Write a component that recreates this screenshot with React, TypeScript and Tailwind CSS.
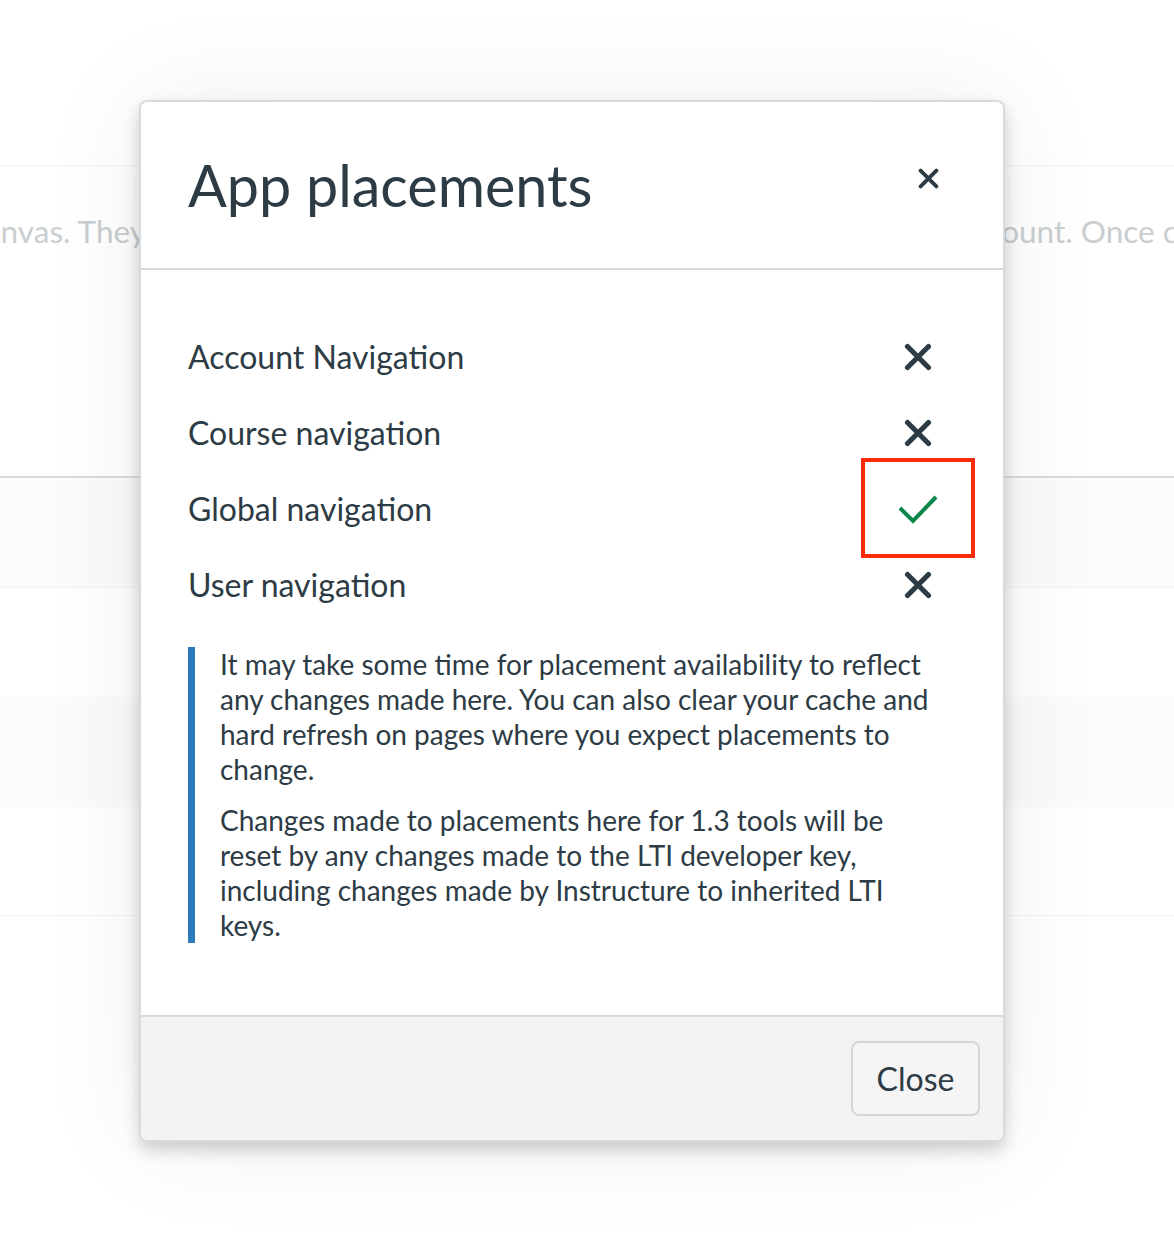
import React from "react";

type Placement = {
  label: string;
  enabled: boolean;
  highlighted?: boolean;
};

const placements: Placement[] = [
  { label: "Account Navigation", enabled: false },
  { label: "Course navigation", enabled: false },
  { label: "Global navigation", enabled: true, highlighted: true },
  { label: "User navigation", enabled: false },
];

const XIcon = ({ size, stroke }: { size: number; stroke: number }) => (
  <svg width={size} height={size} viewBox="0 0 24 24" fill="none">
    <path
      d="M3 3 L21 21 M21 3 L3 21"
      stroke="#2d3b45"
      strokeWidth={stroke}
      strokeLinecap="round"
    />
  </svg>
);

const CheckIcon = () => (
  <svg width="42" height="32" viewBox="0 0 42 32" fill="none">
    <path d="M3 15 L16 28 L39 4" stroke="#0b874b" strokeWidth="4" strokeLinejoin="miter" />
  </svg>
);

const BackgroundPage = () => (
  <div className="flex flex-col">
    <div className="h-[165px]" />
    <div className="h-[311px] border-t border-[#f3f4f5] text-[31.5px] text-[#c9ced1] whitespace-nowrap overflow-hidden">
      <div className="flex h-[131px] items-center">
        <div className="w-[146px] shrink-0 flex justify-end overflow-hidden">
          <span className="shrink-0">features to Canvas. They</span>
        </div>
        <div className="w-[810px] shrink-0" />
        <span className="shrink-0">account. Once configured</span>
      </div>
    </div>
    <div className="h-[2px] bg-[#d9dde0]" />
    <div className="h-[110px] bg-[#fafbfb] border-b border-[#f3f4f5]" />
    <div className="h-[109px] bg-white" />
    <div className="h-[110px] bg-[#fafbfb]" />
    <div className="h-[109px] bg-white border-b border-[#f3f4f5]" />
  </div>
);

const AppPlacementsModal = () => (
  <div className="absolute left-[139px] top-[100px] w-[866px] rounded-[8px] border-2 border-[#d7dade] bg-white shadow-[0_8px_16px_rgba(0,0,0,0.18),0_0_110px_rgba(0,0,0,0.07)] overflow-hidden">
    <div className="h-[168px] flex items-center justify-between pl-[47px] pr-[54px] border-b-2 border-[#d7dade]">
      <h2 className="text-[57.5px] leading-none text-[#2d3b45] -mt-[1px]">App placements</h2>
      <button className="w-[40px] h-[40px] flex items-center justify-center -mt-[14px] mr-[1px]">
        <XIcon size={21} stroke={4.4} />
      </button>
    </div>

    <div className="pl-[47px] pr-[58px] pt-[49px] pb-[72px]">
      {placements.map((p) => (
        <div key={p.label} className="h-[76px] flex items-center justify-between">
          <span className="text-[32px] text-[#2d3b45]">{p.label}</span>
          <div className="relative w-[56px] h-[56px] flex items-center justify-center ml-auto -mr-[1px]">
            {p.enabled ? <CheckIcon /> : <XIcon size={28} stroke={4.4} />}
            {p.highlighted && (
              <div className="absolute left-[-29px] top-[-23px] w-[114px] h-[100px] border-[4px] border-[#fb2c0a]" />
            )}
          </div>
        </div>
      ))}

      <div className="mt-[24px] flex">
        <div className="w-[7px] bg-[#2b7abc] shrink-0" />
        <div className="pl-[25px] w-[750px] text-[28px] leading-[35px] text-[#2d3b45]">
          <p>
            It may take some time for placement availability to reflect any changes made here.
            You can also clear your cache and hard refresh on pages where you expect placements
            to change.
          </p>
          <p className="mt-[16px]">
            Changes made to placements here for 1.3 tools will be reset by any changes made to
            the LTI developer key, including changes made by Instructure to inherited LTI keys.
          </p>
        </div>
      </div>
    </div>

    <div className="h-[125px] border-t-2 border-[#d7dade] bg-[#f2f3f3] flex items-center justify-end pr-[23px]">
      <button className="w-[129px] h-[75px] rounded-[8px] border-2 border-[#d2d6d9] bg-[#f5f5f5] text-[32px] text-[#2d3b45]">
        Close
      </button>
    </div>
  </div>
);

export default function App() {
  return (
    <div className="relative w-[1174px] h-[1238px] overflow-hidden bg-white font-['Lato',sans-serif]">
      <BackgroundPage />
      <AppPlacementsModal />
    </div>
  );
}
